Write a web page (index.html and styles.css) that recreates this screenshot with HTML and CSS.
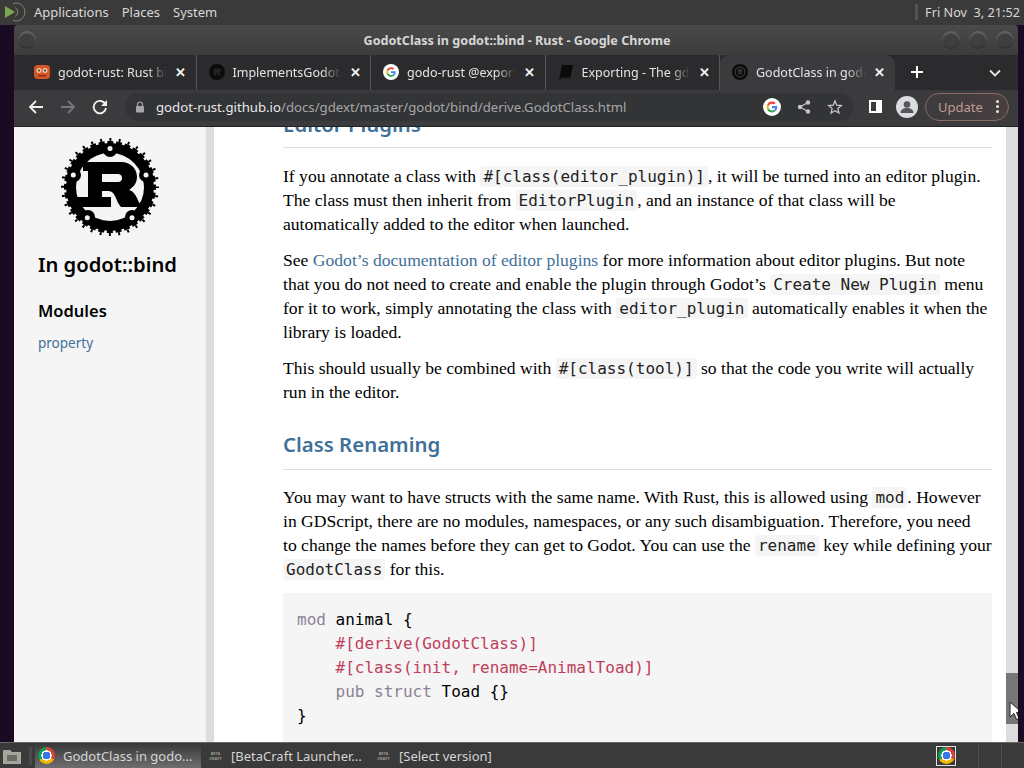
FILE: index.html
```html
<!doctype html>
<html>
<head>
	<meta charset="utf-8">
	<title>GodotClass in godot::bind - Rust</title>
	<link rel="stylesheet" href="styles.css">
</head>
<body>
	<div class="desktop">
		<div class="panel">
			<svg class="panel-logo" width="26" height="24" viewBox="0 0 26 24">
				<path d="M3 6l10 6-10 6z" fill="#7fa650"/>
				<path d="M11 3.500a9 9 0 1 1 0 17M13 7.500a5 5 0 0 1 0 9" fill="none" stroke="#7d8a70" stroke-width="1"/>
			</svg>
			<span class="panel-item">Applications</span>
			<span class="panel-item">Places</span>
			<span class="panel-item">System</span>
			<span class="panel-grip"></span>
			<span class="panel-clock">Fri Nov &nbsp;3, 21:52</span>
		</div>

		<div class="window">
			<div class="titlebar">
				<span class="wm-btn wm-left"></span>
				<span class="title">GodotClass in godot::bind - Rust - Google Chrome</span>
				<span class="wm-btn"></span>
				<span class="wm-btn"></span>
				<span class="wm-btn"></span>
			</div>

			<div class="tabstrip">
				<div class="tab">
					<svg class="favicon" viewBox="0 0 16 16">
						<rect x="0" y="1" width="16" height="14" rx="4" fill="#d4572a"/>
						<circle cx="5" cy="6.500" r="2.500" fill="#f3c9a8"/>
						<circle cx="11" cy="6.500" r="2.500" fill="#f3c9a8"/>
						<circle cx="5" cy="6.500" r="1" fill="#40201a"/>
						<circle cx="11" cy="6.500" r="1" fill="#40201a"/>
						<rect x="4" y="11" width="8" height="1.500" fill="#8c3018"/>
					</svg>
					<span class="tab-title">godot-rust: Rust bi</span>
					<span class="tab-x">✕</span>
				</div>
				<div class="tab">
					<svg class="favicon" viewBox="0 0 16 16">
						<circle cx="8" cy="8" r="8" fill="#0b0b0b"/>
						<path d="M5 4.500h5a2 2 0 0 1 0 4l2 3H9.500L8 9H7v2.500H5z" fill="#222"/>
					</svg>
					<span class="tab-title">ImplementsGodotE</span>
					<span class="tab-x">✕</span>
				</div>
				<div class="tab">
					<svg class="favicon" viewBox="0 0 16 16">
						<circle cx="8" cy="8" r="8" fill="#fff"/>
						<path d="M8 3.200a4.800 4.800 0 0 1 3.200 1.200l-1.300 1.300A3 3 0 0 0 5.200 7L3.700 5.800A4.800 4.800 0 0 1 8 3.200z" fill="#ea4335"/>
						<path d="M3.700 5.800L5.200 7a3 3 0 0 0 0 2L3.700 10.200a4.800 4.800 0 0 1 0-4.400z" fill="#fbbc05"/>
						<path d="M3.700 10.200L5.200 9a3 3 0 0 0 4.700 1.400l1.400 1.200A4.800 4.800 0 0 1 3.700 10.200z" fill="#34a853"/>
						<path d="M8 7.200h4.700a5 5 0 0 1-1.400 4.400L9.900 10.400A2 2 0 0 0 10.800 9H8z" fill="#4285f4"/>
					</svg>
					<span class="tab-title">godo-rust @export</span>
					<span class="tab-x">✕</span>
				</div>
				<div class="tab">
					<svg class="favicon" viewBox="0 0 16 16">
						<path d="M4 1h11L12 15H1z" fill="#0a0a0a"/>
						<path d="M3 14h9" stroke="#333" stroke-width="1"/>
					</svg>
					<span class="tab-title">Exporting - The gdr</span>
					<span class="tab-x">✕</span>
				</div>
				<div class="tab tab-active">
					<svg class="favicon" viewBox="0 0 16 16">
						<circle cx="8" cy="8" r="8" fill="#0b0b0b"/>
						<circle cx="8" cy="8" r="5" fill="none" stroke="#444" stroke-width="1"/>
						<path d="M6 5h3a1.500 1.500 0 0 1 0 3.200l1.500 2.500h-1.500L7.500 8.400V10.700H6z" fill="#333"/>
					</svg>
					<span class="tab-title">GodotClass in godo</span>
					<span class="tab-x">✕</span>
				</div>
				<svg class="tab-new" width="14" height="14" viewBox="0 0 14 14">
					<path d="M7 1v12M1 7h12" stroke="#fff" stroke-width="2"/>
				</svg>
				<svg class="tab-more" width="12" height="8" viewBox="0 0 12 8">
					<path d="M1 1.500l5 5 5-5" fill="none" stroke="#e4e4e4" stroke-width="1.800"/>
				</svg>
			</div>

			<div class="toolbar">
				<svg class="tool tool-back" width="16" height="16" viewBox="0 0 16 16">
					<path d="M15 8H2M8 2L2 8l6 6" fill="none" stroke="#f0f0f0" stroke-width="1.800"/>
				</svg>
				<svg class="tool tool-fwd" width="16" height="16" viewBox="0 0 16 16">
					<path d="M1 8h13M8 2l6 6-6 6" fill="none" stroke="#77787a" stroke-width="1.800"/>
				</svg>
				<svg class="tool tool-reload" width="16" height="16" viewBox="0 0 16 16">
					<path d="M13.500 5.500A6.200 6.200 0 1 0 14 9" fill="none" stroke="#f0f0f0" stroke-width="1.900"/>
					<path d="M15 1v6H9z" fill="#f0f0f0"/>
				</svg>
				<div class="omnibox">
					<svg class="lock" width="10" height="12" viewBox="0 0 10 12">
						<path d="M2.500 5V3.500a2.500 2.500 0 0 1 5 0V5" fill="none" stroke="#a6a7a9" stroke-width="1.200"/>
						<rect x="1" y="5" width="8" height="6.500" rx="1" fill="#a6a7a9"/>
					</svg>
					<span class="url"><b>godot-rust.github.io</b>/docs/gdext/master/godot/bind/derive.GodotClass.html</span>
					<svg class="omni-g" width="18" height="18" viewBox="0 0 16 16">
						<circle cx="8" cy="8" r="8" fill="#fff"/>
						<path d="M8 3.200a4.800 4.800 0 0 1 3.200 1.200l-1.300 1.300A3 3 0 0 0 5.200 7L3.700 5.800A4.800 4.800 0 0 1 8 3.200z" fill="#ea4335"/>
						<path d="M3.700 5.800L5.200 7a3 3 0 0 0 0 2L3.700 10.200a4.800 4.800 0 0 1 0-4.400z" fill="#fbbc05"/>
						<path d="M3.700 10.200L5.200 9a3 3 0 0 0 4.700 1.400l1.400 1.200A4.800 4.800 0 0 1 3.700 10.200z" fill="#34a853"/>
						<path d="M8 7.200h4.700a5 5 0 0 1-1.400 4.400L9.900 10.400A2 2 0 0 0 10.800 9H8z" fill="#4285f4"/>
					</svg>
					<svg class="omni-share" width="14" height="14" viewBox="0 0 14 14">
						<path d="M11 2.500L3 7l8 4.500" fill="none" stroke="#c4c5c7" stroke-width="1.200"/>
						<circle cx="11" cy="2.500" r="2.200" fill="#c4c5c7"/>
						<circle cx="3" cy="7" r="2.200" fill="#c4c5c7"/>
						<circle cx="11" cy="11.500" r="2.200" fill="#c4c5c7"/>
					</svg>
					<svg class="omni-star" width="16" height="16" viewBox="0 0 16 16">
						<path d="M8 2l1.800 4.200 4.500.4-3.400 3 1 4.400L8 11.700 4.100 14l1-4.400-3.400-3 4.500-.4z" fill="none" stroke="#c4c5c7" stroke-width="1.300"/>
					</svg>
				</div>
				<span class="sidepanel"><i></i></span>
				<svg class="avatar" width="22" height="22" viewBox="0 0 22 22">
					<circle cx="11" cy="11" r="11" fill="#dcdde0"/>
					<circle cx="11" cy="8.500" r="3.300" fill="#55565a"/>
					<path d="M4.500 17c0-3.500 3-5 6.500-5s6.500 1.500 6.500 5z" fill="#55565a"/>
				</svg>
				<div class="update">
					<span>Update</span>
					<span class="dots"><i></i><i></i><i></i></span>
				</div>
			</div>

			<div class="page">
				<nav class="sidebar">
					<svg class="rust-logo" width="98" height="98" viewBox="6 6 98 98">
						<!-- two dashed rings stacked make the teeth taper -->
						<circle cx="55" cy="55" r="47.500" fill="none" stroke="#000" stroke-width="3" stroke-dasharray="2 7.328" stroke-dashoffset="1"/>
						<circle cx="55" cy="55" r="44.500" fill="none" stroke="#000" stroke-width="3" stroke-dasharray="6 2.738" stroke-dashoffset="3"/>
						<circle cx="55" cy="55" r="39" fill="none" stroke="#000" stroke-width="10"/>
						<g fill="#000">
							<circle cx="55" cy="18" r="7"/>
							<circle cx="19" cy="43" r="7"/>
							<circle cx="91" cy="43" r="7"/>
							<circle cx="33" cy="85" r="7"/>
							<circle cx="77" cy="85" r="7"/>
						</g>
						<g fill="#f5f5f5">
							<circle cx="55" cy="16.500" r="2.500"/>
							<circle cx="18.300" cy="43" r="2.500"/>
							<circle cx="91" cy="43" r="2.500"/>
							<circle cx="32.300" cy="85.700" r="2.500"/>
							<circle cx="77" cy="85.700" r="2.500"/>
						</g>
						<path fill="#000" fill-rule="evenodd" d="M28 30H66C76 30 82 37 82 45C82 52 77 56 74 58C78 59 80 62 82 66C84 71 86 75 92 75H66C63 72 62 68 60 64C58 60 56 59 52 59H47V65H56V75H22V65H33V39H28ZM47 42V50H63C66 50 67 48 67 46C67 43 65 42 63 42Z"/>
					</svg>
					<h2 class="side-title">In godot::bind</h2>
					<h3 class="side-head">Modules</h3>
					<a class="side-link">property</a>
				</nav>

				<main class="main">
					<div class="main-inner">
						<h2 class="heading">Editor Plugins</h2>
						<p>If you annotate a class with <code>#[class(editor_plugin)]</code>, it will be turned into an editor plugin.<br>The class must then inherit from <code>EditorPlugin</code>, and an instance of that class will be<br>automatically added to the editor when launched.</p>
						<p>See <a>Godot’s documentation of editor plugins</a> for more information about editor plugins. But note<br>that you do not need to create and enable the plugin through Godot’s <code>Create New Plugin</code> menu<br>for it to work, simply annotating the class with <code>editor_plugin</code> automatically enables it when the<br>library is loaded.</p>
						<p>This should usually be combined with <code>#[class(tool)]</code> so that the code you write will actually<br>run in the editor.</p>
						<h2 class="heading">Class Renaming</h2>
						<p>You may want to have structs with the same name. With Rust, this is allowed using <code>mod</code>. However<br>in GDScript, there are no modules, namespaces, or any such disambiguation. Therefore, you need<br>to change the names before they can get to Godot. You can use the <code>rename</code> key while defining your<br><code>GodotClass</code> for this.</p>
						<pre class="codeblock"><span class="kw">mod</span> animal {
    <span class="attr">#[derive(GodotClass)]</span>
    <span class="attr">#[class(init, rename=AnimalToad)]</span>
    <span class="kw">pub struct</span> Toad {}
}</pre>
					</div>
				</main>

				<div class="scrollbar"><div class="thumb"></div></div>
				<svg class="cursor" width="14" height="20" viewBox="0 0 14 20">
					<path d="M1 1v15l4-3.500 2.500 6 2.500-1-2.500-6H13z" fill="#fff" stroke="#222" stroke-width="1"/>
				</svg>
			</div>
		</div>

		<div class="taskbar">
			<svg class="show-desktop" width="20" height="20" viewBox="0 0 20 20">
				<path d="M1 4h7l2 2h9v12H1z" fill="#a4a69c"/>
				<rect x="5" y="9" width="10" height="6" fill="#6a6c64"/>
			</svg>
			<span class="task-grip"></span>
			<div class="task task-active">
				<span class="chrome-icon"></span>
				<span class="task-label">GodotClass in godo...</span>
			</div>
			<div class="task">
				<span class="bc-icon">BETA<br>CRAFT</span>
				<span class="task-label">[BetaCraft Launcher...</span>
			</div>
			<div class="task">
				<span class="bc-icon">BETA<br>CRAFT</span>
				<span class="task-label">[Select version]</span>
			</div>
			<div class="tray">
				<span class="tray-chrome"><span class="chrome-icon"></span></span>
				<span class="tray-cell"></span>
				<span class="tray-cell"></span>
			</div>
		</div>
	</div>
</body>
</html>
```

FILE: styles.css
```css
html, body {
	margin: 0;
	padding: 0;
}
body {
	width: 1024px;
	height: 768px;
	overflow: hidden;
	background: #1a0b22;
	font-family: "Noto Sans", sans-serif;
}
.desktop {
	display: flex;
	flex-direction: column;
	height: 768px;
}

/* top panel */
.panel {
	height: 25px;
	flex: none;
	display: flex;
	align-items: center;
	background: #3a3a3a;
	color: #d8d8d8;
	font-size: 13px;
	padding: 0 4px 1px 2px;
	box-sizing: border-box;
}
.panel-logo {
	margin-right: 6px;
}
.panel-item {
	margin-right: 13px;
}
.panel-grip {
	margin-left: auto;
	width: 3px;
	height: 16px;
	background: #525252;
	margin-right: 7px;
}
.panel-clock {
	font-size: 12.700px;
	white-space: nowrap;
}

/* browser window */
.window {
	flex: 1;
	min-height: 0;
	margin: 0 6px 0 14px;
	display: flex;
	flex-direction: column;
}
.titlebar {
	height: 30px;
	flex: none;
	display: flex;
	align-items: center;
	gap: 7px;
	padding: 0 4px 0 2px;
	background: linear-gradient(#4a4a4a, #3c3c3c);
	border-radius: 4px 4px 0 0;
}
.wm-btn {
	width: 18px;
	height: 18px;
	border-radius: 50%;
	flex: none;
	background: #3f3f3f;
	box-shadow: inset 0 2px 2px #686868, inset 0 -1px 2px #2e2e2e;
	margin-left: 2px;
}
.title {
	flex: 1;
	text-align: center;
	color: #d6d6d6;
	font-size: 12.600px;
	font-weight: 700;
	padding: 1px 0 0 58px;
}
.tabstrip {
	height: 35px;
	flex: none;
	display: flex;
	align-items: stretch;
	padding-left: 8px;
	background: #2b2b2d;
}
.tab {
	width: 174.500px;
	flex: none;
	box-sizing: border-box;
	display: flex;
	align-items: center;
	padding: 0 9px 1px 12px;
	border-right: 1px solid #55565a;
	margin: 0;
	color: #e4e4e6;
	font-size: 12.500px;
}
.tab-active {
	background: #3b3b3e;
	border-right: 0;
	border-radius: 9px 9px 0 0;
}
.favicon {
	width: 16px;
	height: 16px;
	flex: none;
}
.tab-title {
	flex: 1;
	min-width: 0;
	margin: 0 8px;
	white-space: nowrap;
	-webkit-mask-image: linear-gradient(90deg, #000 82%, transparent 100%);
	mask-image: linear-gradient(90deg, #000 82%, transparent 100%);
}
.tab-x {
	font-size: 13px;
	font-weight: 700;
	color: #f4f4f4;
	width: 12px;
	text-align: center;
	flex: none;
}
.tab-new {
	margin: 10px 0 0 15px;
	flex: none;
}
.tab-more {
	margin: 14px 0 0 65px;
	flex: none;
}
.toolbar {
	height: 37px;
	flex: none;
	display: flex;
	align-items: center;
	background: #3b3b3e;
	border-bottom: 1px solid #222;
	padding: 0 0 3px 14px;
	box-sizing: border-box;
}
.tool {
	flex: none;
}
.tool-fwd {
	margin-left: 16px;
}
.tool-reload {
	margin-left: 16px;
}
.omnibox {
	width: 728px;
	height: 28px;
	flex: none;
	margin-left: 17px;
	display: flex;
	align-items: center;
	background: #333436;
	border-radius: 14px;
	padding: 0 10px 0 10px;
	box-sizing: border-box;
}
.lock {
	flex: none;
}
.url {
	margin-left: 11px;
	font-size: 13.200px;
	color: #a6a7a9;
	white-space: nowrap;
	flex: 1;
}
.url b {
	font-weight: 400;
	color: #e8e8ea;
}
.omni-share {
	margin-left: 16px;
}
.omni-star {
	margin-left: 16px;
}
.sidepanel {
	flex: none;
	width: 13px;
	height: 13px;
	box-sizing: border-box;
	border: 2px solid #fff;
	background: #3b3b3e;
	margin-left: 16px;
	display: flex;
	justify-content: flex-end;
}
.sidepanel i {
	width: 4px;
	background: #fff;
}
.avatar {
	flex: none;
	margin-left: 14px;
}
.update {
	flex: none;
	width: 84px;
	height: 28px;
	box-sizing: border-box;
	margin-left: 7px;
	border: 1px solid #8d6a66;
	border-radius: 14px;
	display: flex;
	align-items: center;
	justify-content: space-between;
	padding: 0 9px 0 12px;
	color: #c39a94;
	font-size: 13px;
	background: linear-gradient(90deg, #3b3b3e, #4a3f3f);
}
.dots {
	display: flex;
	flex-direction: column;
	gap: 2px;
}
.dots i {
	width: 3px;
	height: 3px;
	border-radius: 50%;
	background: #e6e6e6;
}

/* the docs page */
.page {
	flex: 1;
	min-height: 0;
	display: flex;
	overflow: hidden;
	position: relative;
	background: #fff;
}
.sidebar {
	width: 192px;
	flex: none;
	box-sizing: border-box;
	background: #f5f5f5;
	padding: 11px 0 0 24px;
}
.rust-logo {
	display: block;
	margin-left: 23px;
}
.side-title {
	margin: 13px 0 0;
	font-size: 20.200px;
	line-height: 30px;
	font-weight: 600;
	color: #000;
}
.side-head {
	margin: 19px 0 0;
	font-size: 16.500px;
	line-height: 26px;
	font-weight: 600;
	color: #000;
}
.side-link {
	display: block;
	margin-top: 8px;
	font-size: 13.500px;
	line-height: 22px;
	color: #3f7099;
}
.main {
	flex: 1;
	min-width: 0;
	border-left: 8px solid #ddd;
	padding: 0 14px 0 69px;
	overflow: hidden;
}
.main-inner {
	margin-top: -18px;
}
.heading {
	margin: 25px 0 15px;
	padding-bottom: 10px;
	border-bottom: 1px solid #ddd;
	font-size: 20.400px;
	line-height: 30px;
	font-weight: 600;
	color: #3f7099;
}
.main-inner .heading:first-child {
	margin: 0 0 16px;
	padding-bottom: 8px;
}
.main-inner p {
	margin: 0 0 12px;
	font-family: "Liberation Serif", serif;
	font-size: 17.600px;
	line-height: 24px;
	color: #000;
	white-space: nowrap;
}
.main-inner p a {
	color: #3f7099;
}
code, pre {
	font-family: "DejaVu Sans Mono", monospace;
	font-size: 16px;
}
code {
	line-height: 16px;
	background: #f5f5f5;
	padding: 1px 3px;
	border-radius: 3px;
	color: #222;
}
.codeblock {
	margin: 0;
	padding: 15px 14px 14px;
	line-height: 24px;
	background: #f5f5f5;
	color: #000;
}
.kw {
	color: #8a8298;
}
.attr {
	color: #c0405a;
}
.scrollbar {
	width: 12px;
	flex: none;
	background: #ddd;
	position: relative;
}
.thumb {
	position: absolute;
	top: 546px;
	left: 0;
	width: 100%;
	height: 51px;
	background: #777;
}
.cursor {
	position: absolute;
	left: 995px;
	top: 574px;
}

/* bottom taskbar */
.taskbar {
	height: 26px;
	flex: none;
	display: flex;
	align-items: center;
	background: #3a3a3a;
	border-top: 1px solid #666;
	box-sizing: border-box;
	padding-left: 2px;
	color: #d4d4d4;
	font-size: 13px;
}
.show-desktop {
	flex: none;
}
.task-grip {
	width: 3px;
	height: 18px;
	background: #4c4c4c;
	margin: 0 3px 0 7px;
}
.task {
	width: 168px;
	height: 24px;
	flex: none;
	box-sizing: border-box;
	display: flex;
	align-items: center;
	padding-left: 3px;
	gap: 8px;
	white-space: nowrap;
}
.task-active {
	width: 166px;
	margin-right: 4px;
	background: linear-gradient(#3a3a3a, #6e6e6e);
}
.chrome-icon {
	flex: none;
	width: 17px;
	height: 17px;
	border-radius: 50%;
	background: radial-gradient(circle, #3b78e7 0 30%, #fff 31% 42%, transparent 43%), conic-gradient(#db4437 0 33%, #f4b400 33% 66%, #0f9d58 66% 100%);
}
.bc-icon {
	flex: none;
	width: 15px;
	font-size: 4px;
	line-height: 5px;
	font-weight: 700;
	color: #9a9a90;
	text-align: center;
}
.tray {
	margin-left: auto;
	display: flex;
	align-items: stretch;
	height: 24px;
}
.tray-chrome {
	width: 20px;
	height: 20px;
	box-sizing: border-box;
	border: 1px solid #e0e0e0;
	display: flex;
	align-items: center;
	justify-content: center;
	margin: 2px 22px 0 0;
}
.tray-cell {
	width: 22px;
	border-left: 1px solid #4e4e4e;
}
```
